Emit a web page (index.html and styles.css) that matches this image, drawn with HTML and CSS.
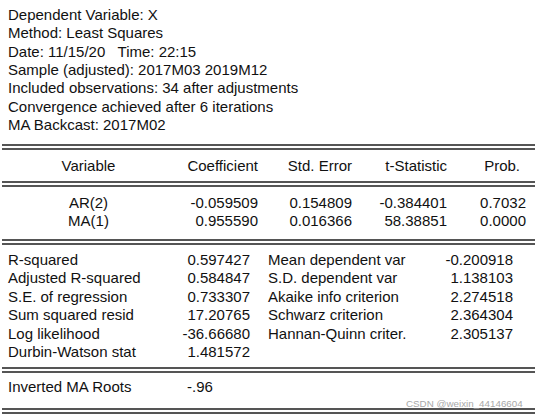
FILE: index.html
```html
<!DOCTYPE html>
<html>
<head>
<meta charset="utf-8">
<link rel="stylesheet" href="styles.css">
</head>
<body>
<div class="report">
  <div class="info">
    <div>Dependent Variable: X</div>
    <div>Method: Least Squares</div>
    <div class="pre">Date: 11/15/20   Time: 22:15</div>
    <div>Sample (adjusted): 2017M03 2019M12</div>
    <div>Included observations: 34 after adjustments</div>
    <div>Convergence achieved after 6 iterations</div>
    <div>MA Backcast: 2017M02</div>
  </div>
  <div class="rule rule-top"></div>
  <div class="coef head">
    <div class="var">Variable</div>
    <div class="num">Coefficient</div>
    <div class="num">Std. Error</div>
    <div class="num">t-Statistic</div>
    <div class="num prob-head">Prob.</div>
  </div>
  <div class="rule rule-head"></div>
  <div class="coef body-rows">
    <div class="var">AR(2)</div>
    <div class="num">-0.059509</div>
    <div class="num">0.154809</div>
    <div class="num">-0.384401</div>
    <div class="num">0.7032</div>
    <div class="var">MA(1)</div>
    <div class="num">0.955590</div>
    <div class="num">0.016366</div>
    <div class="num">58.38851</div>
    <div class="num">0.0000</div>
  </div>
  <div class="rule rule-coef"></div>
  <div class="stats">
    <div>R-squared</div><div class="num">0.597427</div><div class="lbl2">Mean dependent var</div><div class="num">-0.200918</div>
    <div>Adjusted R-squared</div><div class="num">0.584847</div><div class="lbl2">S.D. dependent var</div><div class="num">1.138103</div>
    <div>S.E. of regression</div><div class="num">0.733307</div><div class="lbl2">Akaike info criterion</div><div class="num">2.274518</div>
    <div>Sum squared resid</div><div class="num">17.20765</div><div class="lbl2">Schwarz criterion</div><div class="num">2.364304</div>
    <div>Log likelihood</div><div class="num">-36.66680</div><div class="lbl2">Hannan-Quinn criter.</div><div class="num">2.305137</div>
    <div>Durbin-Watson stat</div><div class="num">1.481572</div><div></div><div></div>
  </div>
  <div class="rule rule-stats"></div>
  <div class="roots">
    <div>Inverted MA Roots</div>
    <div>-.96</div>
  </div>
  <div class="rule rule-end"></div>
  <div class="watermark">CSDN @weixin_44146604</div>
</div>
</body>
</html>
```
FILE: styles.css
```css
html, body {
  margin: 0;
  padding: 0;
  background: #ffffff;
}
.report {
  position: relative;
  width: 537px;
  height: 418px;
  overflow: hidden;
  font-family: "Liberation Sans", Arial, sans-serif;
  font-size: 15px;
  line-height: 18.4px;
  color: #111111;
}
.info {
  padding: 6px 0 0 8px;
  line-height: 18.33px;
}
.pre {
  white-space: pre;
}
.rule {
  margin: 0 2px 0 2px;
  height: 0;
  border-top: 6px double #555555;
}
.rule-top { margin-top: 10px; }
.rule-head { margin-top: 6px; }
.rule-coef { margin-top: 8.6px; }
.rule-stats { margin-top: 6px; }
.rule-end { margin-top: 11px; }
.coef {
  display: grid;
  grid-template-columns: 177px 81px 94px 95px 79px;
}
.head {
  padding-top: 6.6px;
}
.body-rows {
  padding-top: 6.6px;
}
.var {
  text-align: center;
}
.num {
  text-align: right;
}
.prob-head {
  padding-right: 6px;
}
.stats {
  display: grid;
  grid-template-columns: 170px 72px 190px 73px;
  padding: 5.6px 0 0 8px;
}
.lbl2 {
  padding-left: 18px;
}
.roots {
  display: grid;
  grid-template-columns: 179px auto;
  padding: 5px 0 0 8px;
}
.watermark {
  position: absolute;
  left: 406px;
  top: 398px;
  font-size: 9.8px;
  line-height: 11px;
  color: #a8a8a8;
}
```
